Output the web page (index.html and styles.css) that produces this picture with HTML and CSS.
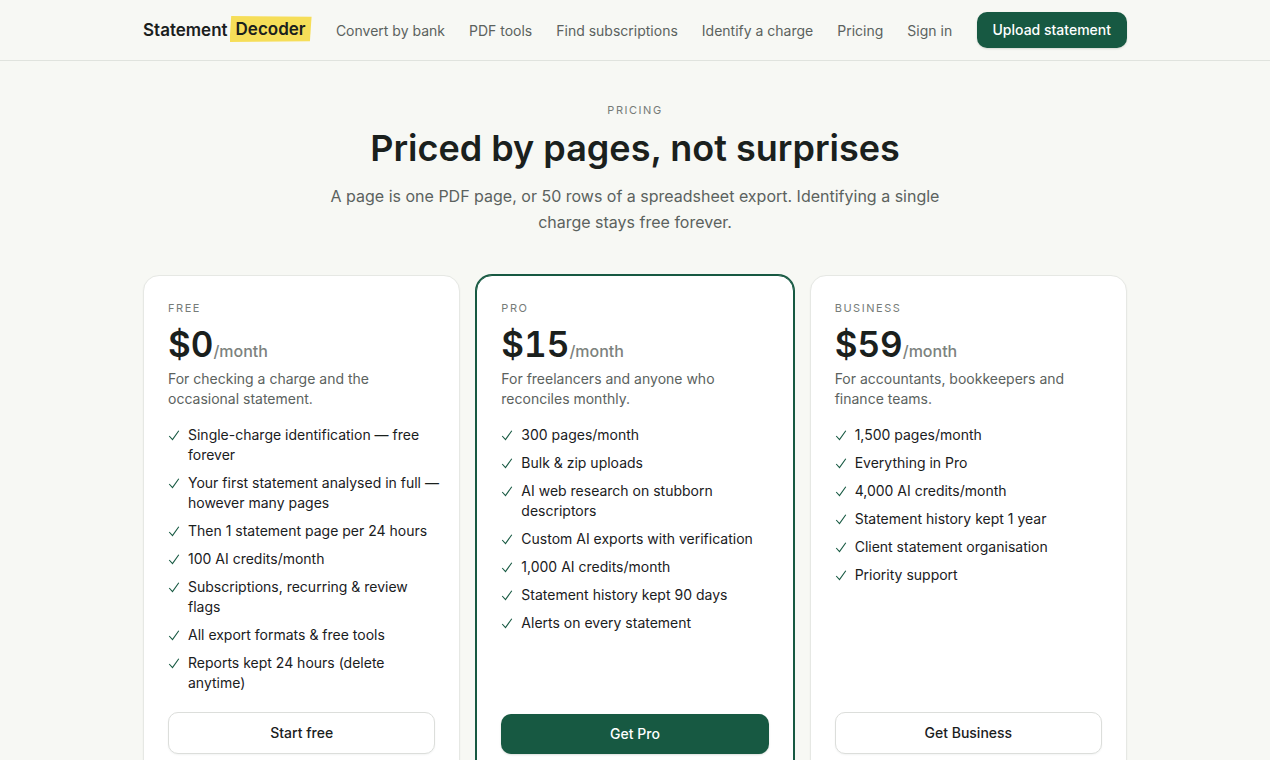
FILE: index.html
```html
<!DOCTYPE html>
<html lang="en">
<head>
<meta charset="utf-8">
<meta name="viewport" content="width=device-width, initial-scale=1">
<title>Pricing – StatementDecoder</title>
<link rel="stylesheet" href="styles.css">
</head>
<body>
<svg class="sprite" aria-hidden="true">
  <symbol id="check" viewBox="0 0 12 12"><path d="M1.2 7 4.5 10.6 10.8 1.8" fill="none" stroke="currentColor" stroke-width="1.1"/></symbol>
</svg>
<header class="site-header">
  <div class="container header-row">
    <a class="brand" href="#"><span>Statement</span><span class="brand-mark">Decoder</span></a>
    <nav class="nav">
      <a href="#">Convert by bank</a>
      <a href="#">PDF tools</a>
      <a href="#">Find subscriptions</a>
      <a href="#">Identify a charge</a>
      <a href="#">Pricing</a>
      <a href="#">Sign in</a>
    </nav>
    <button class="btn btn-primary btn-small" type="button">Upload statement</button>
  </div>
</header>
<main class="container">
  <section class="intro">
    <p class="eyebrow">PRICING</p>
    <h1>Priced by pages, not surprises</h1>
    <p class="lead">A page is one PDF page, or 50 rows of a spreadsheet export. Identifying a single<br>charge stays free forever.</p>
  </section>
  <section class="plans">
    <article class="card">
      <h2 class="eyebrow">FREE</h2>
      <p class="price">$0<span class="per">/month</span></p>
      <p class="summary">For checking a charge and the<br>occasional statement.</p>
      <ul class="features">
        <li><svg class="tick"><use href="#check"/></svg><span>Single-charge identification — free<br>forever</span></li>
        <li><svg class="tick"><use href="#check"/></svg><span>Your first statement analysed in full —<br>however many pages</span></li>
        <li><svg class="tick"><use href="#check"/></svg><span>Then 1 statement page per 24 hours</span></li>
        <li><svg class="tick"><use href="#check"/></svg><span>100 AI credits/month</span></li>
        <li><svg class="tick"><use href="#check"/></svg><span>Subscriptions, recurring &amp; review<br>flags</span></li>
        <li><svg class="tick"><use href="#check"/></svg><span>All export formats &amp; free tools</span></li>
        <li><svg class="tick"><use href="#check"/></svg><span>Reports kept 24 hours (delete<br>anytime)</span></li>
      </ul>
      <button class="btn btn-outline" type="button">Start free</button>
    </article>
    <article class="card card-featured">
      <h2 class="eyebrow">PRO</h2>
      <p class="price">$15<span class="per">/month</span></p>
      <p class="summary">For freelancers and anyone who<br>reconciles monthly.</p>
      <ul class="features">
        <li><svg class="tick"><use href="#check"/></svg><span>300 pages/month</span></li>
        <li><svg class="tick"><use href="#check"/></svg><span>Bulk &amp; zip uploads</span></li>
        <li><svg class="tick"><use href="#check"/></svg><span>AI web research on stubborn<br>descriptors</span></li>
        <li><svg class="tick"><use href="#check"/></svg><span>Custom AI exports with verification</span></li>
        <li><svg class="tick"><use href="#check"/></svg><span>1,000 AI credits/month</span></li>
        <li><svg class="tick"><use href="#check"/></svg><span>Statement history kept 90 days</span></li>
        <li><svg class="tick"><use href="#check"/></svg><span>Alerts on every statement</span></li>
      </ul>
      <button class="btn btn-primary" type="button">Get Pro</button>
    </article>
    <article class="card">
      <h2 class="eyebrow">BUSINESS</h2>
      <p class="price">$59<span class="per">/month</span></p>
      <p class="summary">For accountants, bookkeepers and<br>finance teams.</p>
      <ul class="features">
        <li><svg class="tick"><use href="#check"/></svg><span>1,500 pages/month</span></li>
        <li><svg class="tick"><use href="#check"/></svg><span>Everything in Pro</span></li>
        <li><svg class="tick"><use href="#check"/></svg><span>4,000 AI credits/month</span></li>
        <li><svg class="tick"><use href="#check"/></svg><span>Statement history kept 1 year</span></li>
        <li><svg class="tick"><use href="#check"/></svg><span>Client statement organisation</span></li>
        <li><svg class="tick"><use href="#check"/></svg><span>Priority support</span></li>
      </ul>
      <button class="btn btn-outline" type="button">Get Business</button>
    </article>
  </section>
</main>
</body>
</html>
```
FILE: styles.css
```css
* { box-sizing: border-box; }
html { scrollbar-width: none; }
body {
  margin: 0;
  background: #f7f8f4;
  color: #1a201d;
  font: 400 14px/20px Inter, "Open Sans", sans-serif;
}
h1, h2, p, ul { margin: 0; padding: 0; }
a { color: inherit; text-decoration: none; }
.sprite { display: none; }
.container { max-width: 1024px; margin: 0 auto; padding: 0 20px; }

.site-header { border-bottom: 1px solid #e0e3de; }
.header-row { display: flex; align-items: center; justify-content: space-between; height: 60px; }
.brand {
  display: flex;
  align-items: center;
  font-size: 17px;
  font-weight: 600;
  line-height: 26px;
}
.brand-mark {
  margin: 0 0 2px 2px;
  padding: 0 6px;
  background: #f6de58;
  clip-path: polygon(2% 0, 100% 3%, 98% 97%, 0 100%);
}
.nav { display: flex; gap: 24px; padding-top: 1px; color: #5b625e; white-space: nowrap; }

.btn {
  height: 40px;
  padding: 0 16px;
  border: 0;
  border-radius: 10px;
  font: inherit;
  font-weight: 500;
  box-shadow: 0 1px 2px rgb(20 40 30 / 15%);
  white-space: nowrap;
}
.btn-primary { background: #175942; color: #fff; }
.btn-outline { height: 42px; background: #fff; color: #1a201d; border: 1px solid #dcdedb; box-shadow: 0 1px 2px rgb(20 40 30 / 5%); }
.btn-small { height: 36px; }

.intro { padding: 41px 0 40px; text-align: center; }
.eyebrow {
  color: #767c78;
  font-size: 11px;
  font-weight: 400;
  line-height: 16px;
  letter-spacing: 0.14em;
}
h1 { margin-top: 10px; font-size: 36px; font-weight: 600; line-height: 40px; }
.lead { margin-top: 15px; color: #5b625e; font-size: 16px; line-height: 26px; }

.plans { display: grid; grid-template-columns: repeat(3, minmax(0, 1fr)); gap: 16px; padding-bottom: 48px; }
.card {
  display: flex;
  flex-direction: column;
  padding: 24px;
  border: 1px solid #e6e8e4;
  border-radius: 16px;
  background: #fff;
  box-shadow: 0 1px 2px rgb(20 40 30 / 5%);
}
.card-featured { border-color: #175942; box-shadow: 0 0 0 1px #175942; }
.price { margin-top: 8px; font-size: 35px; font-weight: 600; line-height: 40px; font-variant-numeric: tabular-nums; }
.per { color: #7c827e; font-size: 16px; font-weight: 500; line-height: 20px; }
.summary { margin-top: 5px; color: #5b625e; }
.features { display: grid; gap: 8px; margin: 16px 0 19px; list-style: none; }
.features li { display: flex; gap: 8px; white-space: nowrap; }
.tick { flex: none; width: 12px; height: 12px; margin-top: 4px; color: #175942; }
.card .btn { margin-top: auto; }
```
